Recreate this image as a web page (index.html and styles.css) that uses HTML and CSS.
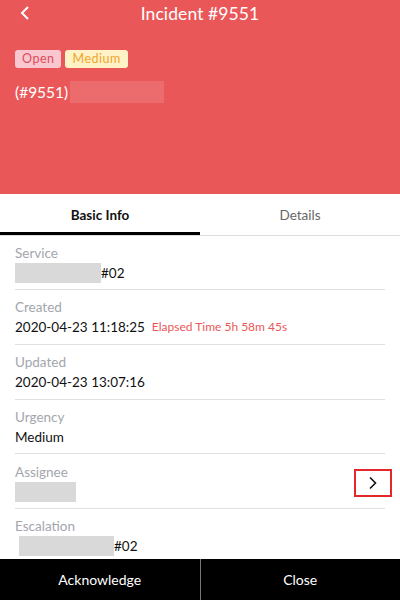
FILE: index.html
```html
<!DOCTYPE html>
<html lang="en">
  <head>
    <meta charset="UTF-8">
    <meta name="viewport" content="width=device-width, initial-scale=1.0">
    <title>Incident #9551</title>
    <link rel="stylesheet" href="styles.css">
  </head>
  <body>
    <div class="page">
      <div class="header">
        <div class="topbar">
          <span class="back">
            <svg width="12" height="14" viewBox="0 0 12 14"><path d="M9 1 L3 7 L9 13" fill="none" stroke="#fff" stroke-width="2"/></svg>
          </span>
          <span class="title">Incident #9551</span>
          <span></span>
        </div>
        <div class="badges">
          <span class="badge badge-open">Open</span>
          <span class="badge badge-medium">Medium</span>
        </div>
        <div class="summary">(#9551)<span class="mask"></span></div>
      </div>

      <div class="tabs">
        <div class="tab active">Basic Info</div>
        <div class="tab">Details</div>
      </div>

      <div class="list">
        <div class="row">
          <div class="label">Service</div>
          <div class="value"><span class="blur" style="width: 86px"></span>#02</div>
        </div>
        <div class="row">
          <div class="label">Created</div>
          <div class="value">2020-04-23 11:18:25 <span class="elapsed">Elapsed Time 5h 58m 45s</span></div>
        </div>
        <div class="row">
          <div class="label">Updated</div>
          <div class="value">2020-04-23 13:07:16</div>
        </div>
        <div class="row">
          <div class="label">Urgency</div>
          <div class="value">Medium</div>
        </div>
        <div class="row row-link">
          <div class="row-main">
            <div class="label">Assignee</div>
            <div class="value"><span class="blur" style="width: 61px"></span></div>
          </div>
          <span class="more">
            <svg width="10" height="14" viewBox="0 0 10 14"><path d="M2 1.5 L7.5 7 L2 12.5" fill="none" stroke="#111" stroke-width="1.6"/></svg>
          </span>
        </div>
        <div class="row">
          <div class="label">Escalation</div>
          <div class="value"><span class="blur blur-gap" style="width: 95px"></span>#02</div>
        </div>
      </div>

      <div class="footer">
        <button>Acknowledge</button>
        <button>Close</button>
      </div>
    </div>
  </body>
</html>
```

FILE: styles.css
```css
body {
  margin: 0;
  font-family: Lato, "Noto Sans", sans-serif;
  background-color: #fff;
}

.page {
  display: flex;
  flex-direction: column;
  height: 600px;
  overflow: hidden;
}

.header {
  background-color: #ea5759;
  height: 194px;
  padding: 0 15px;
  box-sizing: border-box;
  color: #fff;
  flex-shrink: 0;
}

.topbar {
  display: grid;
  grid-template-columns: 1fr auto 1fr;
  align-items: center;
  height: 26px;
}

.back {
  display: flex;
  align-items: center;
  padding-left: 4px;
}

.title {
  font-size: 17.5px;
  letter-spacing: 0.1px;
}

.badges {
  display: flex;
  gap: 4px;
  margin-top: 24px;
}

.badge {
  display: inline-block;
  height: 18px;
  line-height: 18px;
  padding: 0 7px;
  border-radius: 3px;
  font-size: 12.5px;
  letter-spacing: 0.5px;
}

.badge-open {
  background-color: #f9c7d0;
  color: #e04b5a;
}

.badge-medium {
  background-color: #fff2c6;
  color: #f0a52c;
}

.summary {
  display: flex;
  align-items: center;
  margin-top: 13px;
  height: 22px;
  font-size: 15.5px;
}

.mask {
  display: inline-block;
  width: 94px;
  height: 22px;
  margin-left: 2px;
  background-color: #ec6c6e;
}

.tabs {
  display: flex;
  height: 42px;
  border-bottom: 1px solid #ddd;
  box-sizing: border-box;
  flex-shrink: 0;
}

.tab {
  flex: 1;
  display: flex;
  align-items: center;
  justify-content: center;
  font-size: 13.5px;
  color: #666;
  border-bottom: 3px solid transparent;
  padding-top: 3px;
}

.tab.active {
  color: #111;
  font-weight: bold;
  border-bottom-color: #000;
}

.list {
  flex: 1;
  overflow: hidden;
  padding: 0 15px;
}

.row {
  height: 54.75px;
  padding-top: 7px;
  box-sizing: border-box;
  border-bottom: 1px solid #dfdfe3;
}

.row:first-child {
  height: 54px;
}

.row-link {
  display: flex;
  align-items: center;
  padding-top: 0;
}

.row-main {
  flex: 1;
  padding-top: 2px;
}

.label {
  line-height: 20px;
  font-size: 13.5px;
  color: #a3a6ad;
}

.value {
  display: flex;
  align-items: center;
  line-height: 20px;
  height: 20px;
  font-size: 13.5px;
  color: #111;
}

.elapsed {
  margin-left: 7px;
  font-size: 12px;
  color: #ea5759;
}

.blur {
  display: inline-block;
  height: 20px;
  background-color: #d9d9d9;
}

.blur-gap {
  margin-left: 4px;
}

.more {
  display: flex;
  align-items: center;
  justify-content: center;
  width: 34px;
  height: 24px;
  border: 2px solid #e5262b;
  margin-right: -7px;
  margin-top: 4px;
}

.footer {
  display: flex;
  height: 41px;
  background-color: #000;
  flex-shrink: 0;
}

.footer button {
  flex: 1;
  border: none;
  background-color: #000;
  color: #fff;
  font-family: inherit;
  font-size: 14px;
  cursor: pointer;
}

.footer button + button {
  border-left: 1px solid #777;
}
```
